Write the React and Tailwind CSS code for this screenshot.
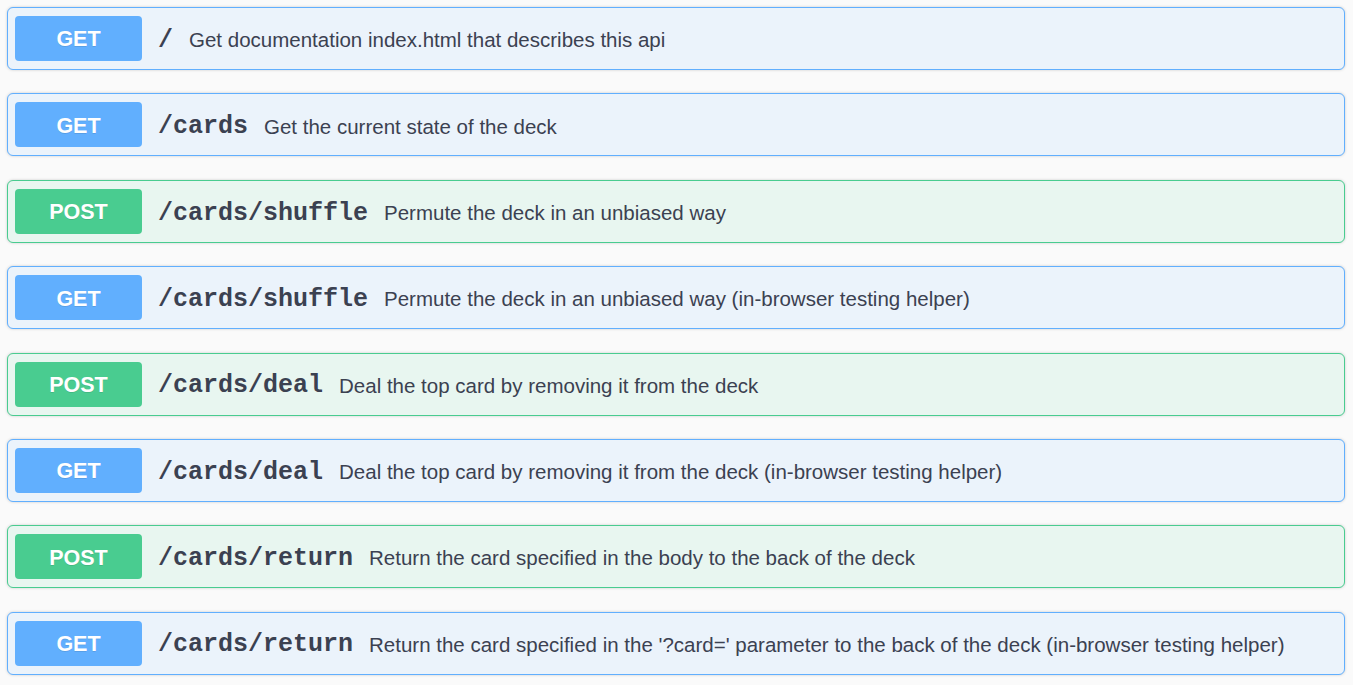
import React from 'react';

const endpoints = [
  { method: 'GET', path: '/', desc: 'Get documentation index.html that describes this api' },
  { method: 'GET', path: '/cards', desc: 'Get the current state of the deck' },
  { method: 'POST', path: '/cards/shuffle', desc: 'Permute the deck in an unbiased way' },
  { method: 'GET', path: '/cards/shuffle', desc: 'Permute the deck in an unbiased way (in-browser testing helper)' },
  { method: 'POST', path: '/cards/deal', desc: 'Deal the top card by removing it from the deck' },
  { method: 'GET', path: '/cards/deal', desc: 'Deal the top card by removing it from the deck (in-browser testing helper)' },
  { method: 'POST', path: '/cards/return', desc: 'Return the card specified in the body to the back of the deck' },
  { method: 'GET', path: '/cards/return', desc: "Return the card specified in the '?card=' parameter to the back of the deck (in-browser testing helper)" },
];

const Opblock = ({ method, path, desc }) => {
  const isPost = method === 'POST';
  return (
    <div
      className={
        'flex items-center h-[63px] px-[7px] rounded-[6px] border shadow-[0_0_3px_rgba(0,0,0,0.19)] ' +
        (isPost ? 'border-[#49cc90] bg-[#e8f6f0]' : 'border-[#61affe] bg-[#ebf3fb]')
      }
    >
      <div
        className={
          'w-[127px] h-[45px] pt-[2px] flex items-center justify-center rounded-[4px] text-white font-bold text-[21.5px] [text-shadow:0_1px_0_rgba(0,0,0,0.1)] ' +
          (isPost ? 'bg-[#49cc90]' : 'bg-[#61affe]')
        }
        style={{ fontFamily: '"Liberation Sans", Arial, sans-serif' }}
      >
        {method}
      </div>
      <span
        className="pt-[4px] pl-[16px] pr-[16px] text-[25px] font-bold text-[#3b4151]"
        style={{ fontFamily: '"Liberation Mono", "Courier New", monospace' }}
      >
        {path}
      </span>
      <span
        className="pt-[4px] text-[20.5px] text-[#3b4151]"
        style={{ fontFamily: '"Liberation Sans", Arial, sans-serif' }}
      >
        {desc}
      </span>
    </div>
  );
};

export default function App() {
  return (
    <div className="min-h-screen bg-[#fafafa] pt-[7px] pl-[7px] pr-[8px]">
      <div className="flex flex-col gap-[23.4px]">
        {endpoints.map((e, i) => (
          <Opblock key={i} {...e} />
        ))}
      </div>
    </div>
  );
}
